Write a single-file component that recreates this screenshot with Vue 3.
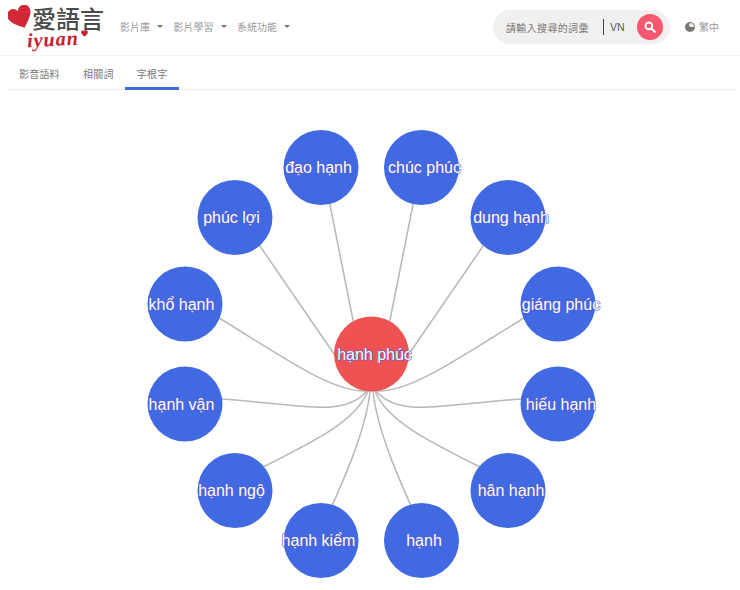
<script setup>
const center = { x: 371.5, y: 354 }
const mirror = (x) => 743 - x
const nodes = [
  { label: 'đạo hạnh', x: 321, y: 167.5, tx: 318.5 },
  { label: 'chúc phúc', x: 421.5, y: 167.5, tx: 424.5 },
  { label: 'dung hạnh', x: 508, y: 217.5, tx: 511 },
  { label: 'giáng phúc', x: 558, y: 304, tx: 561 },
  { label: 'hiếu hạnh', x: 558, y: 404, tx: 561 },
  { label: 'hân hạnh', x: 508, y: 490.5, tx: 511 },
  { label: 'hạnh', x: 421.5, y: 540.5, tx: 424 },
  { label: 'hạnh kiểm', x: 321, y: 540.5, tx: 318.5 },
  { label: 'hạnh ngộ', x: 235, y: 490.5, tx: 231.5 },
  { label: 'hạnh vận', x: 185, y: 404, tx: 181.5 },
  { label: 'khổ hạnh', x: 185, y: 304, tx: 181.5 },
  { label: 'phúc lợi', x: 235, y: 217.5, tx: 231.5 }
]
// Each curve: start, control 1, control 2, end (left half; the right half mirrors it)
const curves = [
  [322.6, 167.5, 333, 220, 347, 290, 358, 345],
  [240, 217, 275, 268, 310, 319, 345, 370],
  [185, 297.5, 270, 347, 325, 391, 365, 391],
  [185, 397, 290, 400, 340, 422, 367, 391],
  [235, 481, 300, 448, 355, 425, 368, 391],
  [321, 530, 345, 478, 366, 430, 370, 391]
]
const toPath = (c, flip) => {
  const p = flip ? c.map((v, i) => (i % 2 === 0 ? mirror(v) : v)) : c
  return `M${p[0]} ${p[1]}C${p[2]} ${p[3]} ${p[4]} ${p[5]} ${p[6]} ${p[7]}`
}
const links = [...curves.map((c) => toPath(c, false)), ...curves.map((c) => toPath(c, true))]
const heart = 'M12 22.500C5 16.500 .5 12.500 .5 7.500 .5 3.500 3.500 1.500 6.500 1.500 9 1.500 11 3 12 5.500c1-2.500 3-4 5.500-4 3 0 6 2 6 6 0 5-4.500 9-11.500 15z'
</script>

<template>
  <div class="page">
    <header class="topbar">
      <div class="logo">
        <svg class="heart" viewBox="0 0 24 24" width="25" height="25">
          <defs>
            <pattern id="speckle" width="2.500" height="2.500" patternUnits="userSpaceOnUse" patternTransform="rotate(20)">
              <rect width="2.500" height="2.500" fill="#d0202f" />
              <circle cx="0.800" cy="0.800" r="0.450" fill="#ee7a85" />
            </pattern>
          </defs>
          <path :d="heart" fill="url(#speckle)" transform="rotate(-22 12 12)" />
        </svg>
        <span class="logo-cn">愛語言</span>
        <span class="logo-en">iyuan</span>
        <svg class="heart-small" viewBox="0 0 24 24" width="7" height="7">
          <path :d="heart" fill="#c8202f" />
        </svg>
      </div>
      <nav class="menu">
        <span class="menu-item">影片庫<i class="caret"></i></span>
        <span class="menu-item">影片學習<i class="caret"></i></span>
        <span class="menu-item">系統功能<i class="caret"></i></span>
      </nav>
      <div class="search">
        <span class="placeholder">請輸入搜尋的詞彙</span>
        <span class="lang">VN</span>
        <span class="search-btn">
          <svg viewBox="0 0 16 16" width="12" height="12">
            <circle cx="6.500" cy="6.500" r="4.500" fill="none" stroke="#fff" stroke-width="2.400" />
            <path d="M10 10l4.500 4.500" stroke="#fff" stroke-width="2.800" stroke-linecap="round" />
          </svg>
        </span>
      </div>
      <div class="locale">
        <svg viewBox="0 0 16 16" width="10" height="10">
          <circle cx="8" cy="8" r="8" fill="#777" />
          <path d="M8 1.500a6.500 6.500 0 0 1 6.500 6.500H9L6 5.500z" fill="#eee" />
        </svg>
        <span>繁中</span>
      </div>
    </header>
    <div class="tabs">
      <span class="tab">影音語料</span>
      <span class="tab">相關詞</span>
      <span class="tab active">字根字</span>
    </div>
    <svg class="graph" width="740" height="500" viewBox="0 90 740 500">
      <path v-for="(d, i) in links" :key="i" class="link" :d="d" />
      <circle v-for="n in nodes" :key="'c' + n.label" class="node" :cx="n.x" :cy="n.y" r="37.500" />
      <circle class="hub" :cx="center.x" :cy="center.y" r="37.500" />
      <text v-for="n in nodes" :key="'t' + n.label" class="label" :x="n.tx" :y="n.y + 5.500">{{ n.label }}</text>
      <text class="label" x="374.500" y="359.500">hạnh phúc</text>
    </svg>
  </div>
</template>

<style>
body { background: #fff; }
</style>

<style scoped>
.page {
  width: 740px;
  height: 590px;
  overflow: hidden;
  background: #fff;
  font-family: "Liberation Sans", "Noto Sans CJK TC", sans-serif;
}
.topbar {
  height: 56px;
  box-sizing: border-box;
  display: flex;
  align-items: center;
  border-bottom: 1px solid #f3f3f3;
}
.logo {
  position: relative;
  width: 120px;
  height: 55px;
  flex: none;
}
.heart { position: absolute; left: 8px; top: 5px; }
.heart-small { position: absolute; left: 81px; top: 30px; }
.logo-cn {
  position: absolute;
  left: 32px;
  top: 1px;
  font: 500 24px/34px "Noto Sans CJK TC", sans-serif;
  color: #4a4a4a;
  white-space: nowrap;
}
.logo-en {
  position: absolute;
  left: 27px;
  top: 28px;
  font: italic 700 20px/22px "Liberation Serif", serif;
  letter-spacing: 1px;
  color: #c8202f;
  transform: rotate(-3deg);
}
.menu {
  display: flex;
  gap: 10.500px;
  font-size: 10px;
  color: #999;
  margin-top: -3px;
}
.menu-item { display: flex; align-items: center; }
.caret {
  margin-left: 7px;
  border: 3px solid transparent;
  border-top: 3px solid #777;
  border-bottom: 0;
}
.search {
  margin-left: auto;
  width: 177px;
  height: 34px;
  box-sizing: border-box;
  margin-top: -1px;
  background: #f0f0f0;
  border-radius: 17px;
  display: flex;
  align-items: center;
  padding: 0 7px 0 13px;
  font-size: 10px;
}
.placeholder { color: #777; white-space: nowrap; letter-spacing: 0.35px; width: 97px; flex: none; }
.lang {
  color: #555;
  font-size: 10.500px;
  border-left: 1px solid #444;
  padding-left: 6px;
  line-height: 16px;
}
.search-btn {
  margin-left: auto;
  width: 26px;
  height: 26px;
  border-radius: 50%;
  background: #f7586f;
  display: flex;
  align-items: center;
  justify-content: center;
}
.locale {
  width: 70px;
  flex: none;
  box-sizing: border-box;
  padding-left: 15px;
  display: flex;
  align-items: center;
  gap: 4px;
  font-size: 10px;
  color: #999;
  margin-top: -2px;
}
.tabs {
  display: flex;
  margin: 0 4px 0 7.400px;
  height: 34px;
  box-sizing: border-box;
  border-bottom: 1px solid #eee;
}
.tab {
  padding: 0 11.600px;
  font-size: 10px;
  letter-spacing: 0.2px;
  line-height: 37px;
  color: #777;
  height: 34px;
  box-sizing: border-box;
}
.tab.active {
  border-bottom: 3px solid #4169e1;
}
.graph { display: block; }
.link { fill: none; stroke: #b8b8b8; stroke-width: 1.500; }
.node { fill: #4169e1; }
.hub { fill: #ee5253; }
.label {
  fill: #fff;
  font: 16px "Liberation Sans", sans-serif;
  text-anchor: middle;
  stroke: #5b5bd6;
  stroke-width: 1.200;
  paint-order: stroke;
}
</style>
